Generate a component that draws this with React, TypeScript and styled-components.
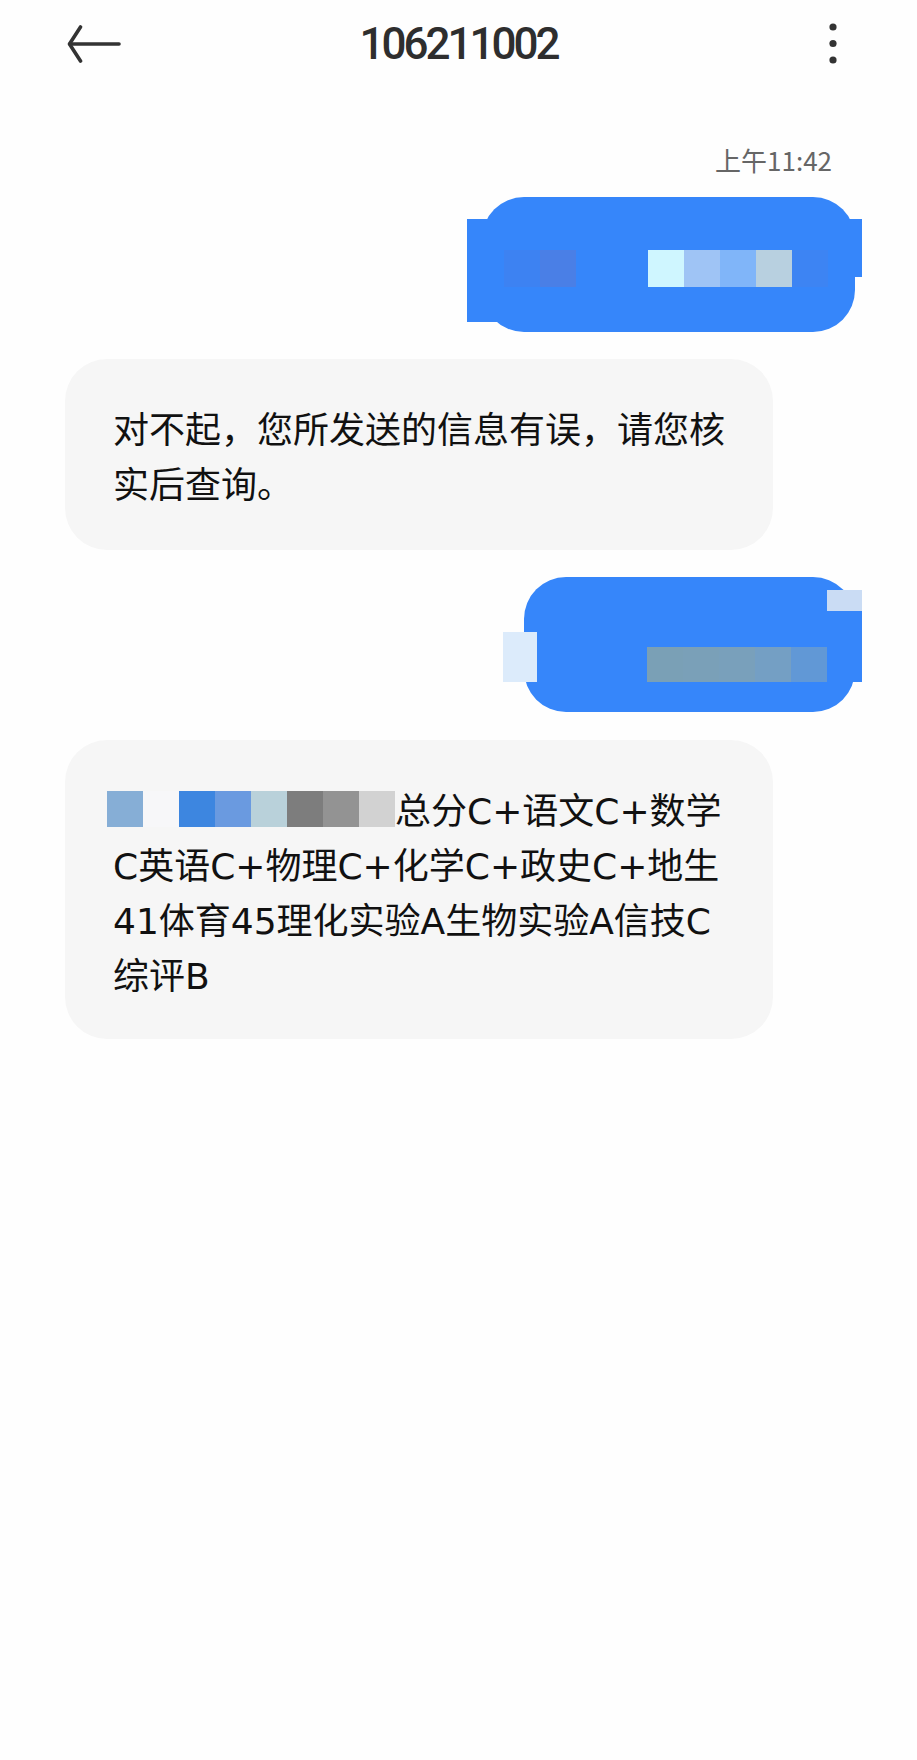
import React from 'react';
import styled, { createGlobalStyle } from 'styled-components';

const GlobalStyle = createGlobalStyle`
    body {
        margin: 0;
        background: #fefefe;
        font-family: "Noto Sans CJK SC", "Noto Sans", sans-serif;
    }
`;

const Page = styled.div`
    width: 917px;
    min-height: 1760px;
    background: #fefefe;
`;

const Header = styled.header`
    height: 88px;
    display: grid;
    grid-template-columns: 1fr auto 1fr;
    align-items: center;
`;

const BackButton = styled.div`
    justify-self: start;
    margin-left: 67px;
    display: flex;
`;

const Title = styled.h1`
    margin: 0;
    font-family: Roboto, "Noto Sans", sans-serif;
    font-weight: 500;
    font-size: 44px;
    letter-spacing: -3px;
    line-height: 1;
    color: #2e2e2e;
`;

const MenuButton = styled.div`
    justify-self: end;
    margin-right: 80px;
    display: flex;
`;

const Thread = styled.main`
    display: flex;
    flex-direction: column;
    padding: 0 62px 0 65px;
`;

const Time = styled.div`
    align-self: flex-end;
    margin: 57px 23px 0 0;
    font-size: 26px;
    line-height: 30px;
    color: #666;
`;

const Outgoing = styled.div<{ $top: number; $pad: string }>`
    position: relative;
    align-self: flex-end;
    margin-top: ${p => p.$top}px;
    padding: ${p => p.$pad};
    background: #3686fa;
    border-radius: 42px;
`;

// smeared edges of the redacted bubble
const Smear = styled.span<{ $side: 'left' | 'right'; $off: number; $top: number; $w: number; $h: number; $bg: string }>`
    position: absolute;
    ${p => p.$side}: ${p => -p.$off}px;
    top: ${p => p.$top}px;
    width: ${p => p.$w}px;
    height: ${p => p.$h}px;
    background: ${p => p.$bg};
`;

const Mosaic = styled.div`
    position: relative;
    display: flex;
`;

const Tile = styled.span<{ $color: string; $h?: number }>`
    display: block;
    width: 36px;
    height: ${p => p.$h ?? 37}px;
    background: ${p => p.$color};
`;

const Incoming = styled.div<{ $top: number; $bottom: number }>`
    align-self: flex-start;
    box-sizing: border-box;
    width: 708px;
    margin-top: ${p => p.$top}px;
    padding: 44px 30px ${p => p.$bottom}px 48px;
    background: #f6f6f6;
    border-radius: 42px;
    font-family: "DejaVu Sans", "Noto Sans CJK SC", sans-serif;
    font-size: 36px;
    line-height: 55px;
    color: #111;
`;

const Line = styled.div`
    white-space: nowrap;
`;

const InlineTile = styled.span<{ $color: string }>`
    display: inline-block;
    width: 36px;
    height: 36px;
    vertical-align: -3px;
    background: ${p => p.$color};
    &:first-child {
        margin-left: -6px;
    }
`;

const firstTiles = ['#3d82f2', '#4a7fe6', '#3686fa', '#3686fa', '#cff6ff', '#9fc4f5', '#80b5f9', '#b8d0e0', '#3d84f3'];
const secondTiles = ['#7aa0b6', '#7aa0b8', '#79a0bb', '#749fc4', '#6198d6'];
const nameTiles = ['#86aed6', '#f7f7f9', '#3d86e0', '#6a9ae0', '#b9d1da', '#7d7d7d', '#939393', '#d2d2d2'];

export default function App() {
    return (
        <Page>
            <GlobalStyle />
            <Header>
                <BackButton>
                    <svg width="54" height="38" viewBox="0 0 54 38" fill="none" stroke="#333" strokeWidth="3.6" strokeLinecap="round" strokeLinejoin="round">
                        <path d="M52 19H3" />
                        <path d="M13.5 2L2.5 19L13.5 36" />
                    </svg>
                </BackButton>
                <Title>106211002</Title>
                <MenuButton>
                    <svg width="8" height="42" viewBox="0 0 8 42" fill="#333">
                        <circle cx="4" cy="4" r="3.6" />
                        <circle cx="4" cy="20.5" r="3.6" />
                        <circle cx="4" cy="37" r="3.6" />
                    </svg>
                </MenuButton>
            </Header>

            <Thread>
                <Time>上午11:42</Time>

                <Outgoing $top={22} $pad="53px 27px 45px 22px">
                    <Smear $side="left" $off={15} $top={22} $w={80} $h={103} $bg="#3686fa" />
                    <Smear $side="right" $off={7} $top={22} $w={40} $h={58} $bg="#3686fa" />
                    <Mosaic>
                        {firstTiles.map((c, i) => <Tile key={i} $color={c} />)}
                    </Mosaic>
                </Outgoing>

                <Incoming $top={27} $bottom={37}>
                    对不起，您所发送的信息有误，请您核实后查询。
                </Incoming>

                <Outgoing $top={27} $pad="70px 28px 30px 123px">
                    <Smear $side="left" $off={21} $top={55} $w={34} $h={50} $bg="#dcebfb" />
                    <Smear $side="right" $off={7} $top={13} $w={35} $h={92} $bg="linear-gradient(#cadcf4 0 21px, #3686fa 21px)" />
                    <Mosaic>
                        {secondTiles.map((c, i) => <Tile key={i} $color={c} $h={35} />)}
                    </Mosaic>
                </Outgoing>

                <Incoming $top={28} $bottom={35}>
                    <Line>
                        {nameTiles.map((c, i) => <InlineTile key={i} $color={c} />)}
                        总分C+语文C+数学
                    </Line>
                    <Line>C英语C+物理C+化学C+政史C+地生</Line>
                    <Line>41体育45理化实验A生物实验A信技C</Line>
                    <Line>综评B</Line>
                </Incoming>
            </Thread>
        </Page>
    );
}
